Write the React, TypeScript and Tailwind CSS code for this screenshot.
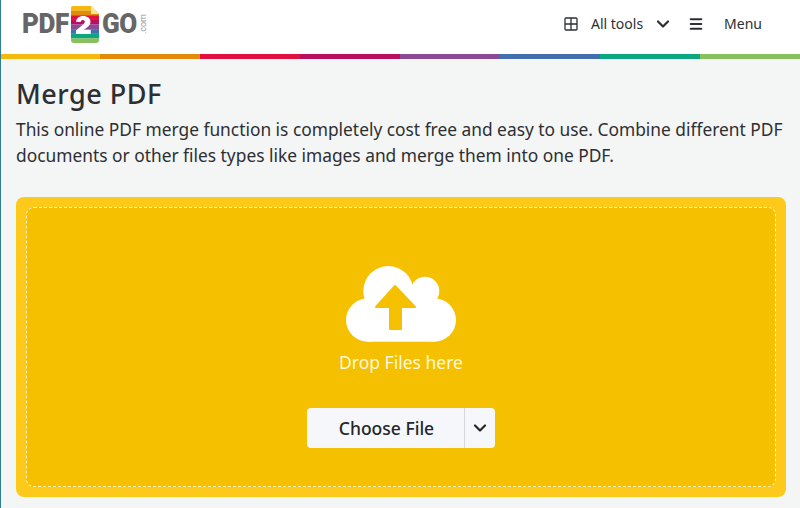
import { ChevronDown, Menu } from 'lucide-react';

const stripes = ['bg-[#f4b90c]', 'bg-[#e28b0b]', 'bg-[#e0103f]', 'bg-[#b8105f]', 'bg-[#8a4a96]', 'bg-[#426fb0]', 'bg-[#0ca67f]', 'bg-[#88c05f]'];
const logoStripes = ['#f4b90c', '#e28b0b', '#e0103f', '#b8105f', '#8a4a96', '#426fb0', '#0ca67f', '#88c05f'];

function Logo() {
  return (
    <div className="flex items-center h-[48px] pl-[21px] font-['Roboto',sans-serif] font-black text-[#666666]">
      <span className="text-[28px] leading-none tracking-[-0.5px] scale-x-[0.93] origin-left w-[49px]">PDF</span>
      <svg width="28" height="37" viewBox="0 0 28 37">
        <clipPath id="logo-file">
          <path d="M2 0H20L28 8V34a3 3 0 0 1-3 3H3a3 3 0 0 1-3-3V2a2 2 0 0 1 2-2Z" />
        </clipPath>
        <g clipPath="url(#logo-file)">
          {logoStripes.map((color, i) => (
            <rect key={color} y={i * 4.625} width="28" height="4.7" fill={color} />
          ))}
        </g>
        <path d="M20 0L28 8H20Z" fill="#fbe58a" />
        <path transform="translate(-0.3 4.500) scale(0.88 0.783)" d="M6 14.500C6.500 10 9.500 7 14 7c5 0 8.500 3 8.500 7.300 0 3-1.500 5-4 7.300L15 24.500h7.800V30H6v-4.300l8-7.800c1.300-1.300 2-2.300 2-3.500 0-1.400-.8-2.300-2.200-2.300-1.400 0-2.300 1-2.500 2.600Z" fill="#ffffff" />
      </svg>
      <span className="text-[28px] leading-none ml-[3px] tracking-[-0.5px] scale-x-[0.93] origin-left w-[37px]">GO</span>
      <span className="text-[9px] leading-none font-normal text-[#999999] [writing-mode:vertical-rl] rotate-180">.com</span>
    </div>
  );
}

export default function App() {
  return (
    <div className="w-[800px] h-[508px] overflow-hidden bg-[#f4f5f5] border-l border-[#2f7f93] font-['Noto_Sans',sans-serif] text-[#2d2f33]">
      <header className="bg-white h-[54px] flex justify-between">
        <Logo />
        <nav className="flex items-center text-sm pr-[38px] gap-[11px] mt-[-6px]">
          <svg width="14" height="14" viewBox="0 0 14 14" fill="none" stroke="#2d2f33" strokeWidth="1.3">
            <rect x="1" y="1" width="12" height="12" rx="1" />
            <path d="M7 1V13M1 7H13" />
          </svg>
          <span className="ml-[2px]">All tools</span>
          <ChevronDown size={20} strokeWidth={2.6} className="-ml-[1px] -mr-[2px]" />
          <Menu size={16} strokeWidth={3} className="ml-[6px]" />
          <span className="ml-[9px]">Menu</span>
        </nav>
      </header>
      <div className="flex h-[5px] -ml-px">
        {stripes.map(color => (
          <div key={color} className={`flex-1 ${color}`} />
        ))}
      </div>
      <main className="pl-[15px] pr-[14px]">
        <h1 className="text-[27px] leading-[36px] font-medium mt-[17px] tracking-[0.5px]">Merge PDF</h1>
        <p className="text-[17.35px] leading-[26px] mt-[4px]">
          This online PDF merge function is completely cost free and easy to use. Combine different PDF documents or other files types like images and merge them into one PDF.
        </p>
        <section className="mt-[29px] h-[300px] rounded-lg bg-[#fdca1c] p-[10px]">
          <div className="h-full rounded-lg border border-dashed border-[#fff3c4] bg-[#f4c000] flex flex-col items-center">
            <svg width="110" height="76" viewBox="0 0 110 76" className="mt-[58px]">
              <g fill="#ffffff">
                <circle cx="42.300" cy="25" r="25" />
                <circle cx="79" cy="25" r="14.300" />
                <circle cx="88.300" cy="54" r="21.700" />
                <circle cx="21.700" cy="54" r="21.700" />
                <rect x="21.700" y="30" width="66.600" height="45.700" />
                <rect x="42" y="25" width="38" height="10" />
              </g>
              <polygon points="49,20 69,41 55,41 55,63 44,63 44,41 30,41" fill="#f4c000" stroke="#f4c000" strokeWidth="2" strokeLinejoin="round" />
            </svg>
            <div className="text-[17.500px] leading-[24px] text-[#fff8dc] mt-[8px]">Drop Files here</div>
            <div className="mt-[34px] flex h-[40px] w-[188px] rounded bg-[#f5f7fa] text-[#24262b]">
              <button className="w-[158px] pl-[2px] text-[17.500px] font-medium border-r border-[#d5d8dc]">Choose File</button>
              <button className="flex-1 flex items-center justify-center">
                <ChevronDown size={20} strokeWidth={2.6} />
              </button>
            </div>
          </div>
        </section>
      </main>
    </div>
  );
}
